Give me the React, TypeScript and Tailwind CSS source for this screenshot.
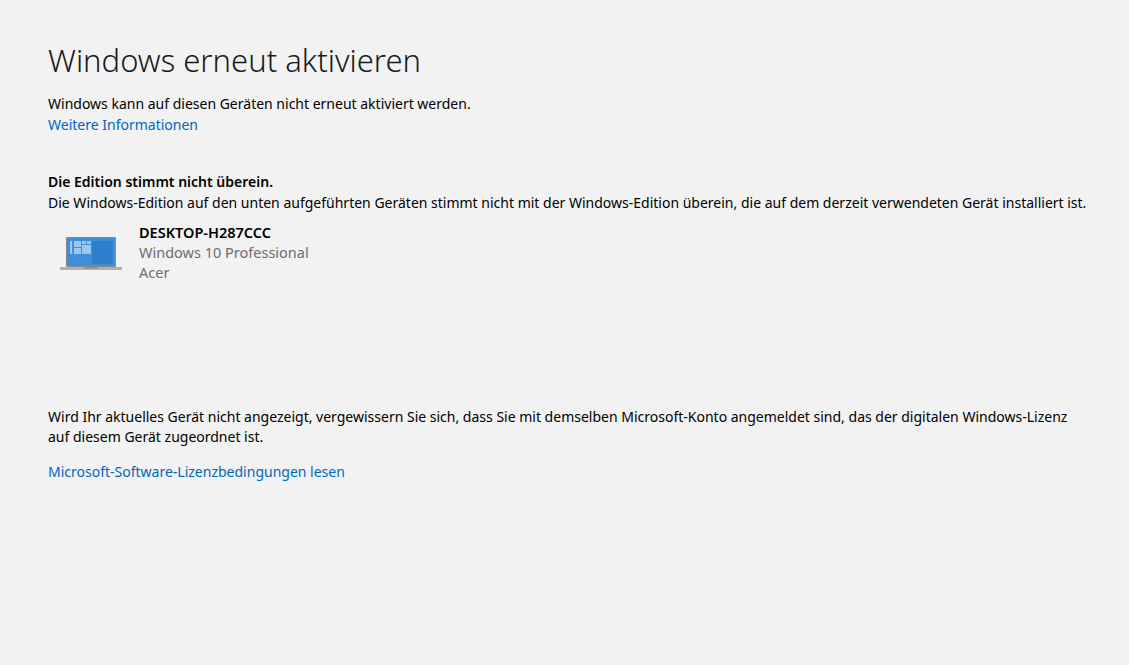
export default function App() {
  return (
    <div className="min-h-[665px] w-full bg-[#f2f2f2] pl-12 pr-8 pt-[38px] text-[14px] text-black" style={{ fontFamily: '"Noto Sans", "Segoe UI", sans-serif' }}>
      <h1 className="text-[31px] font-light leading-[44px] text-[#1a1a1a]">Windows erneut aktivieren</h1>
      <p className="mt-[12px] leading-[20px]">Windows kann auf diesen Geräten nicht erneut aktiviert werden.</p>
      <a className="block leading-[22px] text-[#0067c0]" href="#">Weitere Informationen</a>
      <p className="mt-[35px] font-semibold leading-[22px]">Die Edition stimmt nicht überein.</p>
      <p className="leading-[20px]">Die Windows-Edition auf den unten aufgeführten Geräten stimmt nicht mit der Windows-Edition überein, die auf dem derzeit verwendeten Gerät installiert ist.</p>
      <div className="mt-[9px] flex items-start gap-[17px]">
        <svg width="62" height="48" viewBox="0 0 62 48" className="mt-[10px] ml-[12px]">
          <rect x="6" y="5" width="50" height="30" fill="#8a8a8a" rx="1" />
          <rect x="7" y="6" width="48" height="28" fill="#3d8fd8" />
          <rect x="10" y="9" width="2" height="13" fill="#9cc7ee" />
          <rect x="14" y="9" width="7" height="6" fill="#9cc7ee" />
          <rect x="14" y="16" width="7" height="6" fill="#9cc7ee" />
          <rect x="22" y="9" width="4" height="3" fill="#9cc7ee" />
          <rect x="27" y="9" width="4" height="3" fill="#9cc7ee" />
          <rect x="22" y="13" width="9" height="9" fill="#9cc7ee" />
          <rect x="32" y="9" width="21" height="23" fill="#2f7fcc" />
          <rect x="0" y="35" width="62" height="3" fill="#b0b0b0" />
          <rect x="24" y="35" width="14" height="1.5" fill="#8a8a8a" />
        </svg>
        <div className="flex flex-col">
          <span className="text-[14.5px] font-semibold leading-[20px]">DESKTOP-H287CCC</span>
          <span className="text-[14.5px] leading-[20px] text-[#6d6d6d]">Windows 10 Professional</span>
          <span className="text-[14.5px] leading-[20px] text-[#6d6d6d]">Acer</span>
        </div>
      </div>
      <p className="mt-[125px] max-w-[1030px] leading-[20px]">Wird Ihr aktuelles Gerät nicht angezeigt, vergewissern Sie sich, dass Sie mit demselben Microsoft-Konto angemeldet sind, das der digitalen Windows-Lizenz auf diesem Gerät zugeordnet ist.</p>
      <a className="mt-[15px] block leading-[20px] text-[#0067c0]" href="#">Microsoft-Software-Lizenzbedingungen lesen</a>
    </div>
  );
}
